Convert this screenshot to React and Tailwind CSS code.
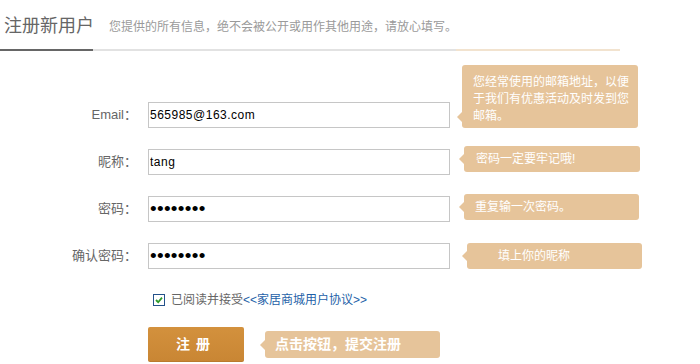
import React from 'react';

const font = { fontFamily: '"Liberation Sans", "Noto Sans CJK SC", sans-serif' };

function Tip({ children, className = '', arrow = 'center', bold = false }) {
  return (
    <div className={`relative bg-[#e6c49a] rounded-[3px] text-white ${bold ? 'text-[14px] font-bold' : 'text-[12px]'} ${className}`}>
      <span
        className={`absolute left-[-5px] w-0 h-0 border-y-[5px] border-y-transparent border-r-[5px] border-r-[#e6c49a] ${arrow === 'bottom' ? 'bottom-[6px]' : 'top-1/2 -translate-y-1/2'}`}
      />
      {children}
    </div>
  );
}

function Row({ label, type = 'text', value, children, className = '', align = 'items-center' }) {
  const isPwd = type === 'password';
  return (
    <div className={`flex ${align} ${className}`}>
      <label className="w-[137px] text-right text-[13px] text-[#666] leading-[26px] whitespace-nowrap">
        {label}
      </label>
      <input
        type={type}
        value={value}
        readOnly
        className={`ml-[11px] w-[302px] h-[26px] shrink-0 border border-[#c6c6c6] bg-white pl-[1px] text-black outline-none ${isPwd ? 'text-[19px] tracking-[0.3px]' : 'text-[12px] tracking-[0.5px]'}`}
        style={font}
      />
      {children}
    </div>
  );
}

export default function App() {
  return (
    <div className="w-[700px] h-[364px] bg-white overflow-hidden" style={font}>
      <div className="flex items-center h-[49px] pl-[4px] pt-[2px]">
        <h1 className="text-[18px] text-[#666] leading-none">注册新用户</h1>
        <p className="ml-[15px] text-[12px] text-[#9a9a9a] mt-[2px]">
          您提供的所有信息，绝不会被公开或用作其他用途，请放心填写。
        </p>
      </div>
      <div className="flex h-[2px]">
        <div className="w-[93px] bg-[#666]" />
        <div className="w-[363px] bg-[#e2e2e2]" />
        <div className="w-[164px] bg-[#f2e3cf]" />
      </div>

      <div className="mt-[14px]">
        <Row label="Email：" value="565985@163.com" align="items-end">
          <Tip arrow="bottom" className="ml-[12px] w-[176px] h-[63px] pl-[11px] pr-[6px] pt-[9px] leading-[17px]">
            您经常使用的邮箱地址，以便于我们有优惠活动及时发到您邮箱。
          </Tip>
        </Row>
        <Row label="昵称：" value="tang" className="mt-[21px]">
          <Tip className="ml-[14px] w-[176px] h-[26px] -mt-[6px] pl-[12px] leading-[26px]">
            密码一定要牢记哦!
          </Tip>
        </Row>
        <Row label="密码：" type="password" value="12345678" className="mt-[21px]">
          <Tip className="ml-[14px] w-[175px] h-[26px] -mt-[4px] pl-[11px] leading-[26px]">
            重复输一次密码。
          </Tip>
        </Row>
        <Row label="确认密码：" type="password" value="12345678" className="mt-[21px]">
          <Tip className="ml-[17px] w-[175px] h-[26px] pl-[31px] leading-[26px]">
            填上你的昵称
          </Tip>
        </Row>
      </div>

      <div className="flex items-center mt-[22px] pl-[153px] text-[12px]">
        <span className="w-[12px] h-[12px] border border-[#24528a] bg-white flex items-center justify-center">
          <svg width="8" height="8" viewBox="0 0 8 8">
            <path d="M1 4 L3.2 6.2 L7 1.6" stroke="#2d9a2a" strokeWidth="1.8" fill="none" />
          </svg>
        </span>
        <span className="ml-[6px] text-[#666]">已阅读并接受</span>
        <a className="text-[#1e5fa8]">&lt;&lt;家居商城用户协议&gt;&gt;</a>
      </div>

      <div className="flex items-center mt-[18px] pl-[148px]">
        <button className="w-[96px] h-[35px] rounded-[2px] bg-gradient-to-b from-[#d3913d] to-[#c98634] border-b border-[#b97a2e] text-white text-[14px] font-bold tracking-[6px]">
          注册
        </button>
        <Tip bold className="ml-[21px] w-[175px] h-[27px] pl-[10px] leading-[27px]">
          点击按钮，提交注册
        </Tip>
      </div>
    </div>
  );
}
